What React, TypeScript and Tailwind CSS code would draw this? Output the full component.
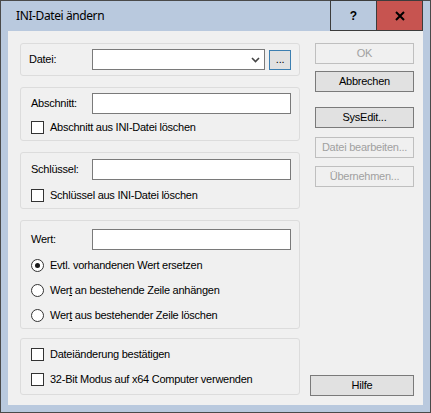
import React from 'react'

const ui = "font-['Liberation_Sans',Arial,sans-serif] text-[11px] tracking-[-0.25px] text-black"

function Group({ className, children }: { className: string; children: React.ReactNode }) {
  return (
    <div className={`rounded-[3px] border border-[#dcdcdc] ${className}`}>
      {children}
    </div>
  )
}

function TextBox({ className = '' }: { className?: string }) {
  return <div className={`h-[21px] border border-[#7a7a7a] bg-white ${className}`} />
}

function CheckBox({ label }: { label: React.ReactNode }) {
  return (
    <div className="flex items-center h-[13px]">
      <div className="w-[13px] h-[13px] border border-[#333333] bg-white" />
      <span className="ml-[6px] leading-[13px]">{label}</span>
    </div>
  )
}

function Radio({ label, checked = false }: { label: React.ReactNode; checked?: boolean }) {
  return (
    <div className="flex items-center h-[13px]">
      <div className="w-[13px] h-[13px] rounded-full border border-[#333333] bg-white flex items-center justify-center">
        {checked && <div className="w-[5px] h-[5px] rounded-full bg-[#1a1a1a]" />}
      </div>
      <span className="ml-[6px] leading-[13px]">{label}</span>
    </div>
  )
}

function Button({ label, disabled = false, className = '' }: { label: string; disabled?: boolean; className?: string }) {
  return (
    <div
      className={`h-[21px] flex items-center justify-center border ${
        disabled ? 'border-[#bfbfbf] bg-[#f0f0f0] text-[#a0a0a0]' : 'border-[#7a7a7a] bg-[#e1e1e1] text-black'
      } ${className}`}
    >
      {label}
    </div>
  )
}

export default function App() {
  return (
    <div className="w-[431px] h-[413px] border border-[#4a4a4a] bg-[#b9c9de] flex flex-col">
      {/* Titelleiste */}
      <div className="h-[30px] flex shrink-0">
        <div className="flex-1 flex items-center pl-[15px] font-['Noto_Sans',sans-serif] text-[12px] tracking-[-0.4px] text-black">
          INI-Datei ändern
        </div>
        <div className="w-[47px] -mt-px border border-[#3c3c3c] flex items-center justify-center font-['Liberation_Sans',Arial,sans-serif] font-bold text-[12px] text-black">
          ?
        </div>
        <div className="w-[46px] -mt-px border border-l-0 border-[#3c3c3c] bg-[#c75450] flex items-center justify-center">
          <svg width="10" height="10" viewBox="0 0 10 10">
            <path d="M1 1 L9 9 M9 1 L1 9" stroke="#000" strokeWidth="2" />
          </svg>
        </div>
        <div className="w-[7px]" />
      </div>

      {/* Client-Bereich */}
      <div className={`flex-1 mx-[7px] mb-[7px] bg-[#f0f0f0] flex pl-[12px] pt-[12px] ${ui}`}>
        <div className="w-[280px] flex flex-col">
          <Group className="h-[33px] flex items-center pl-[8px] pr-[8px]">
            <span className="w-[63px]">Datei:</span>
            <div className="w-[174px] h-[21px] border border-[#7a7a7a] bg-white flex items-center justify-end pr-[4px]">
              <svg width="9" height="6" viewBox="0 0 9 6">
                <path d="M1 1 L4.5 4.5 L8 1" stroke="#444" strokeWidth="1.6" fill="none" />
              </svg>
            </div>
            <div className="ml-[4px] w-[22px] h-[20px] border border-[#3c7fb1] bg-[#e1e1e1] flex items-center justify-center leading-none">
              ...
            </div>
          </Group>

          <Group className="mt-[11px] h-[54px] pl-[10px] pr-[8px] pt-[5px]">
            <div className="flex items-center">
              <span className="w-[61px]">Abschnitt:</span>
              <TextBox className="w-[200px]" />
            </div>
            <div className="mt-[7px]">
              <CheckBox label="Abschnitt aus INI-Datei löschen" />
            </div>
          </Group>

          <Group className="mt-[11px] h-[57px] pl-[10px] pr-[8px] pt-[6px]">
            <div className="flex items-center">
              <span className="w-[61px]">Schlüssel:</span>
              <TextBox className="w-[200px]" />
            </div>
            <div className="mt-[9px]">
              <CheckBox label="Schlüssel aus INI-Datei löschen" />
            </div>
          </Group>

          <Group className="mt-[11px] h-[109px] pl-[10px] pr-[8px] pt-[8px]">
            <div className="flex items-center">
              <span className="w-[61px]">Wert:</span>
              <TextBox className="w-[200px] h-[20px]" />
            </div>
            <div className="mt-[9px] flex flex-col gap-[12px]">
              <Radio checked label="Evtl. vorhandenen Wert ersetzen" />
              <Radio label={<>Wer<span className="underline">t</span> an bestehende Zeile anhängen</>} />
              <Radio label={<>Wer<span className="underline">t</span> aus bestehender Zeile löschen</>} />
            </div>
          </Group>

          <Group className="mt-[9px] h-[57px] pl-[10px] pr-[8px] pt-[9px] flex flex-col gap-[12px]">
            <CheckBox label="Dateiänderung bestätigen" />
            <CheckBox label="32-Bit Modus auf x64 Computer verwenden" />
          </Group>
        </div>

        <div className="flex-1 flex flex-col pr-[9px]">
          <div className="pl-[15px] flex flex-col">
            <Button label="OK" disabled />
            <Button label="Abbrechen" className="mt-[7px]" />
            <Button label="SysEdit..." className="mt-[15px]" />
            <Button label="Datei bearbeiten..." disabled className="mt-[9px]" />
            <Button label="Übernehmen..." disabled className="mt-[8px]" />
          </div>
          <Button label="Hilfe" className="mt-auto mb-[9px] ml-[10px]" />
        </div>
      </div>
    </div>
  )
}
